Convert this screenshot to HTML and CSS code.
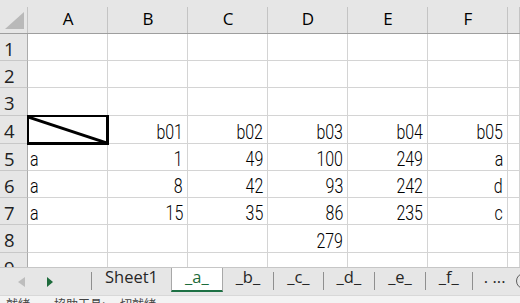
FILE: index.html
```html
<!DOCTYPE html>
<html lang="zh-Hant">
<head>
  <meta charset="UTF-8">
  <title>Sheet</title>
  <link rel="stylesheet" href="styles.css">
</head>
<body>
  <!-- Grid -->
  <div class="sheet">
    <div class="corner"><svg width="27" height="33"><polygon points="24,12 24,29 5,29" fill="#b9b9b9"/></svg></div>
    <div class="colhead">A</div>
    <div class="colhead">B</div>
    <div class="colhead">C</div>
    <div class="colhead">D</div>
    <div class="colhead">E</div>
    <div class="colhead">F</div>
    <div class="colhead"></div>

    <div class="rowhead">1</div>
    <div class="cell"></div><div class="cell"></div><div class="cell"></div><div class="cell"></div><div class="cell"></div><div class="cell"></div><div class="cell"></div>

    <div class="rowhead">2</div>
    <div class="cell"></div><div class="cell"></div><div class="cell"></div><div class="cell"></div><div class="cell"></div><div class="cell"></div><div class="cell"></div>

    <div class="rowhead">3</div>
    <div class="cell"></div><div class="cell"></div><div class="cell"></div><div class="cell"></div><div class="cell"></div><div class="cell"></div><div class="cell"></div>

    <div class="rowhead">4</div>
    <div class="cell diag"><svg viewBox="0 0 79 27" preserveAspectRatio="none"><line x1="0" y1="1" x2="79" y2="27" stroke="#000" stroke-width="3"/></svg></div>
    <div class="cell num"><span>b01</span></div>
    <div class="cell num"><span>b02</span></div>
    <div class="cell num"><span>b03</span></div>
    <div class="cell num"><span>b04</span></div>
    <div class="cell num"><span>b05</span></div>
    <div class="cell"></div>

    <div class="rowhead">5</div>
    <div class="cell"><span>a</span></div>
    <div class="cell num"><span>1</span></div>
    <div class="cell num"><span>49</span></div>
    <div class="cell num"><span>100</span></div>
    <div class="cell num"><span>249</span></div>
    <div class="cell num"><span>a</span></div>
    <div class="cell"></div>

    <div class="rowhead">6</div>
    <div class="cell"><span>a</span></div>
    <div class="cell num"><span>8</span></div>
    <div class="cell num"><span>42</span></div>
    <div class="cell num"><span>93</span></div>
    <div class="cell num"><span>242</span></div>
    <div class="cell num"><span>d</span></div>
    <div class="cell"></div>

    <div class="rowhead">7</div>
    <div class="cell"><span>a</span></div>
    <div class="cell num"><span>15</span></div>
    <div class="cell num"><span>35</span></div>
    <div class="cell num"><span>86</span></div>
    <div class="cell num"><span>235</span></div>
    <div class="cell num"><span>c</span></div>
    <div class="cell"></div>

    <div class="rowhead">8</div>
    <div class="cell"></div><div class="cell"></div><div class="cell"></div>
    <div class="cell num"><span>279</span></div>
    <div class="cell"></div><div class="cell"></div><div class="cell"></div>

    <div class="rowhead">9</div>
    <div class="cell"></div><div class="cell"></div><div class="cell"></div><div class="cell"></div><div class="cell"></div><div class="cell"></div><div class="cell"></div>
  </div>

  <!-- Sheet tabs -->
  <div class="tabbar">
    <div class="nav">
      <span class="arrow-left"></span>
      <span class="arrow-right"></span>
    </div>
    <span class="sep"></span>
    <div class="tab">Sheet1</div>
    <div class="tab active">_a_</div>
    <div class="tab">_b_</div>
    <span class="sep"></span>
    <div class="tab">_c_</div>
    <span class="sep"></span>
    <div class="tab">_d_</div>
    <span class="sep"></span>
    <div class="tab">_e_</div>
    <span class="sep"></span>
    <div class="tab">_f_</div>
    <span class="sep"></span>
    <div class="more">. ...</div>
    <span class="add"></span>
  </div>

  <!-- Status bar -->
  <div class="status">就緒　　協助工具: 一切就緒</div>
</body>
</html>
```

FILE: styles.css
```css
/* Global */
* {
  box-sizing: border-box;
}

body {
  margin: 0;
  width: 520px;
  height: 303px;
  overflow: hidden;
  display: flex;
  flex-direction: column;
  background: #fff;
  font-family: "Open Sans", sans-serif;
}

/* Grid */
.sheet {
  flex: none;
  height: 267px;
  overflow: hidden;
  display: grid;
  grid-template-columns: 28px repeat(6, 80px) 1fr;
  grid-template-rows: 34px 27px 27px 28px 28px 27px 27px 27px 28px 27px;
}

.corner,
.colhead {
  background-color: #e6e6e6;
  background-image: linear-gradient(#c4c4c4, #c4c4c4);
  background-size: 1px 26px;
  background-position: right bottom;
  background-repeat: no-repeat;
  border-bottom: 1px solid #9e9e9e;
}

.corner svg {
  display: block;
}

.colhead {
  display: flex;
  align-items: center;
  justify-content: center;
  padding-top: 3px;
  font-size: 17px;
  color: #000;
}

.rowhead {
  display: flex;
  align-items: center;
  padding: 2px 0 0 4px;
  background: #e6e6e6;
  border-right: 1px solid #ababab;
  border-bottom: 1px solid #c8c8c8;
  font-size: 18.5px;
  color: #222;
}

.cell {
  display: flex;
  align-items: flex-end;
  padding: 0 4px 0 2px;
  border-right: 1px solid #d4d4d4;
  border-bottom: 1px solid #d4d4d4;
  font-family: "Roboto", "Liberation Sans", sans-serif;
  font-weight: 300;
  font-size: 21px;
  line-height: 21px;
  color: #000;
  white-space: nowrap;
}

.cell span {
  display: inline-block;
  transform: scaleX(0.76);
  transform-origin: left bottom;
}

.num {
  justify-content: flex-end;
}

.num span {
  transform-origin: right bottom;
}

/* Diagonal header cell */
.diag {
  position: relative;
  z-index: 1;
  display: block;
  padding: 0;
  border-color: #000;
  box-shadow: 0 0 0 1px #000, inset 0 0 0 1px #000;
}

.diag svg {
  display: block;
  width: 100%;
  height: 100%;
}

/* Sheet tabs */
.tabbar {
  flex: none;
  height: 28px;
  display: flex;
  align-items: flex-start;
  background: #e6e6e6;
  border-top: 1px solid #c6c6c6;
  white-space: nowrap;
}

.tabbar > * {
  flex: none;
}

.nav {
  width: 91px;
  height: 27px;
  display: flex;
  align-items: center;
  padding-left: 18px;
}

.arrow-left {
  width: 0;
  height: 0;
  border-top: 5px solid transparent;
  border-bottom: 5px solid transparent;
  border-right: 7px solid #bdbdbd;
}

.arrow-right {
  width: 0;
  height: 0;
  margin-left: 22px;
  border-top: 5px solid transparent;
  border-bottom: 5px solid transparent;
  border-left: 6px solid #1e6b3c;
}

.sep {
  width: 1px;
  height: 18px;
  margin-top: 4px;
  background: #8f8f8f;
}

.tab {
  height: 24px;
  padding: 0 13px;
  font-size: 16.5px;
  line-height: 17px;
  color: #262626;
}

.tab.active {
  background: #fff;
  color: #1d6b3b;
  border-left: 1px solid #a8a8a8;
  border-right: 1px solid #a8a8a8;
  border-bottom: 2px solid #1e7145;
}

.more {
  padding-left: 11px;
  font-size: 16.5px;
  line-height: 17px;
  color: #262626;
}

.add {
  width: 16px;
  height: 16px;
  margin: 5px 0 0 11px;
  border: 1px solid #5f5f5f;
  border-radius: 50%;
}

/* Status bar */
.status {
  flex: 1;
  padding-left: 6px;
  background: #f3f3f3;
  border-top: 1px solid #d8d8d8;
  font-family: "Noto Sans CJK TC", sans-serif;
  font-size: 12px;
  line-height: 16px;
  color: #444;
  white-space: nowrap;
  overflow: hidden;
}
```
